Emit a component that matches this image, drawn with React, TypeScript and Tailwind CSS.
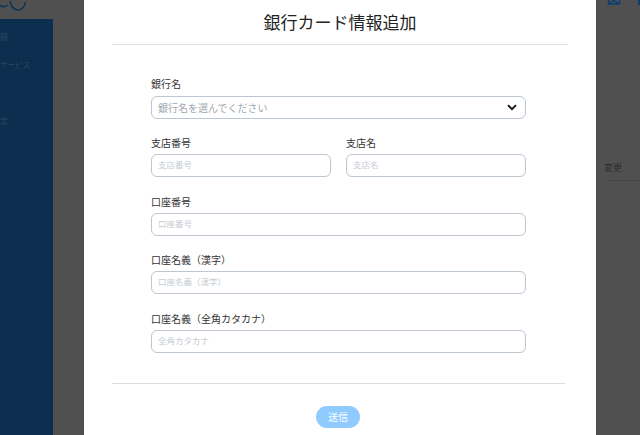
import React from 'react';

const inputBorder = 'border-[1.5px] border-[#bcc7d1] rounded-[6px] bg-white';

const Field: React.FC<{ label: string; placeholder: string; className?: string }> = ({ label, placeholder, className }) => (
  <div className={className}>
    <div className="h-[11px] flex items-center text-[10px] leading-none text-[#333]">{label}</div>
    <input
      readOnly
      placeholder={placeholder}
      className={`mt-[6px] block w-full h-[23px] px-[6px] pb-[3px] text-[8.5px] outline-none placeholder:text-[#c6ccd3] ${inputBorder}`}
    />
  </div>
);

const App: React.FC = () => {
  return (
    <div className="relative w-[640px] h-[435px] overflow-hidden bg-[#505050] font-['Noto_Sans_CJK_JP','Noto_Sans',sans-serif]">
      {/* page behind the dialog */}
      <div className="h-[19px] flex justify-between">
        <svg width="30" height="19" viewBox="0 0 30 19" fill="none" stroke="#0c3557" strokeWidth="1.6">
          <path d="M0 5.500c2 1.500 5 1.500 7.500-.5" />
          <path d="M10 1c.5 5 4 9 8 9s7-4 7.500-8" />
        </svg>
        <div className="flex gap-[17px]">
          <svg width="14" height="6" viewBox="0 0 14 6" fill="none" stroke="#0c3f70" strokeWidth="1.5">
            <path d="M1.500 0v4h11V0M1.500 4l5-3.500 6 3.500" />
          </svg>
          <div className="w-[2px] h-[5px] bg-[#0c3f70]" />
        </div>
      </div>
      <div className="w-[53px] h-[416px] bg-[#0c2f4f] pt-[14px] text-[#2b4662] whitespace-nowrap">
        <div className="h-[8px] text-[8px] leading-[8px]">額</div>
        <div className="mt-[20px] h-[8px] text-[7.500px] leading-[8px]">サービス</div>
        <div className="mt-[48px] h-[8px] text-[8px] leading-[8px]">定</div>
      </div>
      <div className="absolute left-[604px] top-[163px] text-[9px] leading-none text-[#2c2c2c]">変更</div>
      <div className="absolute left-[607px] right-0 top-[180px] h-px bg-[#444]" />

      {/* dialog */}
      <div className="absolute left-[84px] top-0 w-[512px] h-[435px] bg-white">
        <div className="mx-[28px] h-[45px] border-b border-[#d8e2ea] flex items-center justify-center pb-[1px]">
          <h1 className="text-[17px] leading-none font-normal text-[#222]">銀行カード情報追加</h1>
        </div>
        <div className="ml-[67px] w-[375px] pt-[33px]">
          <div>
            <div className="h-[11px] flex items-center text-[10px] leading-none text-[#333]">銀行名</div>
            <div className={`mt-[7px] h-[23px] px-[6px] flex items-center justify-between ${inputBorder}`}>
              <span className="text-[10px] leading-none text-[#a2a7ad]">銀行名を選んでください</span>
              <svg width="10" height="7" viewBox="0 0 10 7" fill="none" stroke="#111" strokeWidth="1.8" className="mr-[2px]">
                <path d="M1 1.200l4 4 4-4" />
              </svg>
            </div>
          </div>
          <div className="mt-[18px] flex gap-[15px]">
            <Field className="w-[180px]" label="支店番号" placeholder="支店番号" />
            <Field className="w-[180px]" label="支店名" placeholder="支店名" />
          </div>
          <Field className="mt-[19px]" label="口座番号" placeholder="口座番号" />
          <Field className="mt-[18px]" label="口座名義（漢字）" placeholder="口座名義（漢字）" />
          <Field className="mt-[19px]" label="口座名義（全角カタカナ）" placeholder="全角カタカナ" />
        </div>
        <div className="mt-[30px] ml-[28px] w-[453px] h-px bg-[#dcdcdc]" />
        <div className="mt-[22px] flex justify-center -ml-[4px]">
          <button className="w-[44px] h-[22px] rounded-full bg-[#8fcbff] text-white text-[10px] leading-none">送信</button>
        </div>
      </div>
    </div>
  );
};

export default App;
